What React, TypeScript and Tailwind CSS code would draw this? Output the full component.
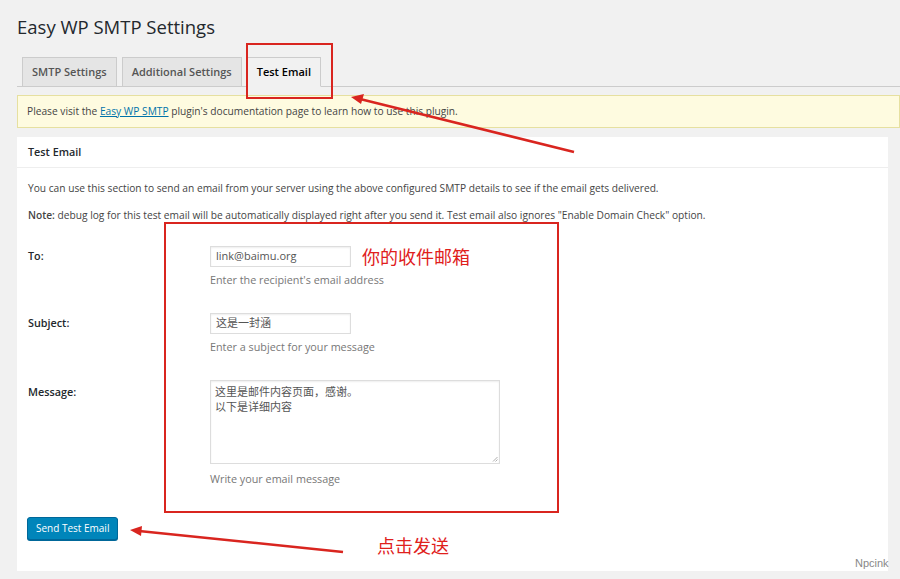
import React from "react";

const font = { fontFamily: '"Open Sans", "Noto Sans CJK SC", sans-serif' };

export default function App() {
  return (
    <div
      className="relative w-[900px] h-[579px] overflow-hidden bg-[#f1f1f1] text-[#444]"
      style={font}
    >
      <div className="pl-[17px]">
        <h1 className="pt-[14px] text-[18.5px] leading-[26px] text-[#23282d] font-normal">
          Easy WP SMTP Settings
        </h1>
        {/* tabs */}
        <div className="mt-[17px] flex h-[30px] items-end gap-[5px] border-b border-[#ccc] pl-[5px]">
          <div className="h-[30px] -mb-px flex items-center border border-[#ccc] bg-[#e5e5e5] px-[9px] text-[11px] font-semibold text-[#555]">
            SMTP Settings
          </div>
          <div className="h-[30px] -mb-px flex items-center border border-[#ccc] bg-[#e5e5e5] px-[9px] text-[11px] font-semibold text-[#555]">
            Additional Settings
          </div>
          <div className="h-[30px] -mb-px flex items-center border border-[#ccc] border-b-[#f1f1f1] bg-[#f1f1f1] px-[9px] text-[11px] font-semibold text-[#000]">
            Test Email
          </div>
        </div>
        {/* notice */}
        <div className="mt-[8px] flex h-[33px] items-center border border-[#e6e0a0] bg-[#fefbe0] pl-[9px] text-[10.2px] text-[#444]">
          <span>
            Please visit the{" "}
            <span className="text-[#0073aa] underline">Easy WP SMTP</span>{" "}
            plugin's documentation page to learn how to use this plugin.
          </span>
        </div>
        {/* card */}
        <div className="mt-[9px] mr-[12px] h-[434px] bg-white">
          <div className="flex h-[31px] items-center border-b border-[#eee] pl-[11px] text-[10.8px] font-semibold text-[#23282d]">
            Test Email
          </div>
          <div className="pl-[11px]">
            <p className="mt-[12px] text-[10.2px] leading-[16px] text-[#444]">
              You can use this section to send an email from your server using the above configured SMTP details to see if the email gets delivered.
            </p>
            <p className="mt-[11px] text-[10.2px] leading-[16px] text-[#444]">
              <span className="font-semibold">Note:</span> debug log for this test email will be automatically displayed right after you send it. Test email also ignores "Enable Domain Check" option.
            </p>

            {/* To */}
            <div className="mt-[23px] flex">
              <div className="w-[182px] flex h-[21px] items-center text-[10.8px] font-semibold text-[#23282d]">
                To:
              </div>
              <div>
                <div className="flex h-[21px] w-[141px] items-center border border-[#ddd] bg-white pl-[5px] text-[11px] text-[#555] shadow-[inset_0_1px_2px_rgba(0,0,0,0.07)]">
                  link@baimu.org
                </div>
                <div className="mt-[5px] text-[10.8px] leading-[16px] text-[#777]">
                  Enter the recipient's email address
                </div>
              </div>
            </div>

            {/* Subject */}
            <div className="mt-[25px] flex">
              <div className="w-[182px] flex h-[21px] items-center text-[10.8px] font-semibold text-[#23282d]">
                Subject:
              </div>
              <div>
                <div className="flex h-[21px] w-[141px] items-center border border-[#ddd] bg-white pl-[5px] text-[11px] text-[#555] shadow-[inset_0_1px_2px_rgba(0,0,0,0.07)]">
                  这是一封涵
                </div>
                <div className="mt-[5px] text-[10.8px] leading-[16px] text-[#777]">
                  Enter a subject for your message
                </div>
              </div>
            </div>

            {/* Message */}
            <div className="mt-[25px] flex">
              <div className="w-[182px] pt-[4px] text-[10.8px] font-semibold text-[#23282d]">
                Message:
              </div>
              <div>
                <div className="relative h-[84px] w-[290px] border border-[#ddd] bg-white pl-[4px] pt-[3px] text-[11px] leading-[15px] text-[#555] shadow-[inset_0_1px_2px_rgba(0,0,0,0.07)]">
                  <div>这里是邮件内容页面，感谢。</div>
                  <div>以下是详细内容</div>
                  <svg className="absolute right-[1px] bottom-[1px]" width="6" height="6" viewBox="0 0 6 6">
                    <path d="M5.5 1 L1 5.5 M5.5 3.5 L3.5 5.5" stroke="#999" strokeWidth="0.8" />
                  </svg>
                </div>
                <div className="mt-[7px] text-[10.8px] leading-[16px] text-[#777]">
                  Write your email message
                </div>
              </div>
            </div>

            <button className="mt-[30px] -ml-[1px] h-[23px] rounded-[3px] border border-[#006799] bg-[#0085ba] px-[8px] text-[10px] text-white shadow-[0_1px_0_#006799]">
              Send Test Email
            </button>
          </div>
        </div>
      </div>

      {/* annotations */}
      <div className="absolute left-[246px] top-[43px] h-[56px] w-[87px] border-2 border-[#d9251f]" />
      <div className="absolute left-[164px] top-[222px] h-[291px] w-[395px] border-2 border-[#d9251f]" />
      <div className="absolute left-[362px] top-[243px] text-[18px] leading-[26px] text-[#e0201c]" style={{ fontFamily: '"Noto Sans CJK SC", sans-serif' }}>
        你的收件邮箱
      </div>
      <div className="absolute left-[377px] top-[532px] text-[18px] leading-[26px] text-[#e0201c]" style={{ fontFamily: '"Noto Sans CJK SC", sans-serif' }}>
        点击发送
      </div>
      <svg className="absolute left-0 top-0" width="900" height="579" viewBox="0 0 900 579">
        <line x1="574" y1="152" x2="360" y2="99" stroke="#d9251f" strokeWidth="2.5" />
        <polygon points="351,97 364,94 361,104" fill="#d9251f" />
        <line x1="343" y1="552" x2="139" y2="531" stroke="#d9251f" strokeWidth="2.5" />
        <polygon points="130,530 142,526 141,536" fill="#d9251f" />
      </svg>
      <div className="absolute left-[855px] top-[555px] text-[11px] text-[#888]" style={{ fontFamily: '"Liberation Sans", sans-serif' }}>
        Npcink
      </div>
    </div>
  );
}
